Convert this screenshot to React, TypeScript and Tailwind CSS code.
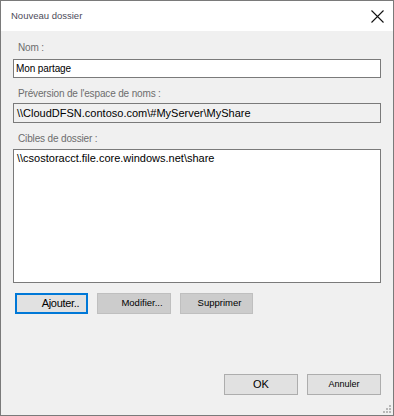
const labelCls = "h-[14px] leading-[14px] pl-[5px] text-[10px] tracking-[-0.15px] text-[#6d6d6d]";

const Btn = ({
  label,
  width,
  variant,
  text,
}: {
  label: string;
  width: string;
  variant: "focus" | "disabled" | "normal";
  text: string;
}) => {
  const base = "h-[21px] flex items-center justify-center text-black";
  const look =
    variant === "focus"
      ? "bg-[#e1e1e1] border-2 border-[#0078d7]"
      : variant === "disabled"
      ? "bg-[#cccccc] border border-[#bfbfbf]"
      : "bg-[#e1e1e1] border border-[#adadad]";
  return (
    <div className={`${base} ${look} ${width}`}>
      <span className={text}>{label}</span>
    </div>
  );
};

export default function App() {
  return (
    <div
      className="w-[394px] h-[416px] flex flex-col border border-[#7a7a7a] bg-[#f0f0f0] text-black relative"
      style={{ fontFamily: '"Liberation Sans", Arial, sans-serif' }}
    >
      <div className="h-[30px] bg-white flex items-center justify-between pl-[10px] pr-[9px] shrink-0">
        <span className="text-[9.5px] text-[#4d4b5a]">Nouveau dossier</span>
        <svg width="13" height="13" viewBox="0 0 13 13">
          <path d="M0.5 0.5 L12.5 12.5 M12.5 0.5 L0.5 12.5" stroke="#111" strokeWidth="1.1" />
        </svg>
      </div>

      <div className="flex flex-col px-[12px]">
        <div className={`${labelCls} mt-[10px]`}>Nom :</div>
        <div className="mt-[4px] h-[19px] bg-white border border-[#7a7a7a] flex items-center pl-[2px] text-[10px] tracking-[-0.1px]">
          Mon partage
        </div>

        <div className={`${labelCls} mt-[9px]`}>Préversion de l'espace de noms :</div>
        <div className="mt-[2px] h-[20px] bg-[#f0f0f0] border border-[#7a7a7a] flex items-center pl-[3px] text-[11px]">
          \\CloudDFSN.contoso.com\#MyServer\MyShare
        </div>

        <div className={`${labelCls} mt-[9px]`}>Cibles de dossier :</div>
        <div className="mt-[3px] h-[134px] bg-white border border-[#7a7a7a] pl-[3px] pt-[1px] text-[11px] leading-[14px]">
          \\csostoracct.file.core.windows.net\share
        </div>

        <div className="mt-[10px] ml-[2px] flex gap-[9px]">
          <Btn label="Ajouter.." width="w-[73px] pl-[18px]" variant="focus" text="text-[11px] tracking-[-0.3px]" />
          <Btn label="Modifier..." width="w-[74px] pl-[16px]" variant="disabled" text="text-[9.5px]" />
          <Btn label="Supprimer" width="w-[73px] pl-[6px]" variant="disabled" text="text-[9.5px]" />
        </div>
      </div>

      <div className="mt-auto mb-[20px] pr-[12px] flex justify-end gap-[9px]">
        <Btn label="OK" width="w-[74px]" variant="normal" text="text-[11px]" />
        <Btn label="Annuler" width="w-[74px]" variant="normal" text="text-[9px]" />
      </div>

      <svg className="absolute right-[2px] bottom-[2px]" width="8" height="8" viewBox="0 0 8 8">
        <rect x="6" y="0" width="2" height="2" fill="#b8b8b8" />
        <rect x="3" y="3" width="2" height="2" fill="#b8b8b8" />
        <rect x="6" y="3" width="2" height="2" fill="#b8b8b8" />
        <rect x="0" y="6" width="2" height="2" fill="#b8b8b8" />
        <rect x="3" y="6" width="2" height="2" fill="#b8b8b8" />
        <rect x="6" y="6" width="2" height="2" fill="#b8b8b8" />
      </svg>
    </div>
  );
}
